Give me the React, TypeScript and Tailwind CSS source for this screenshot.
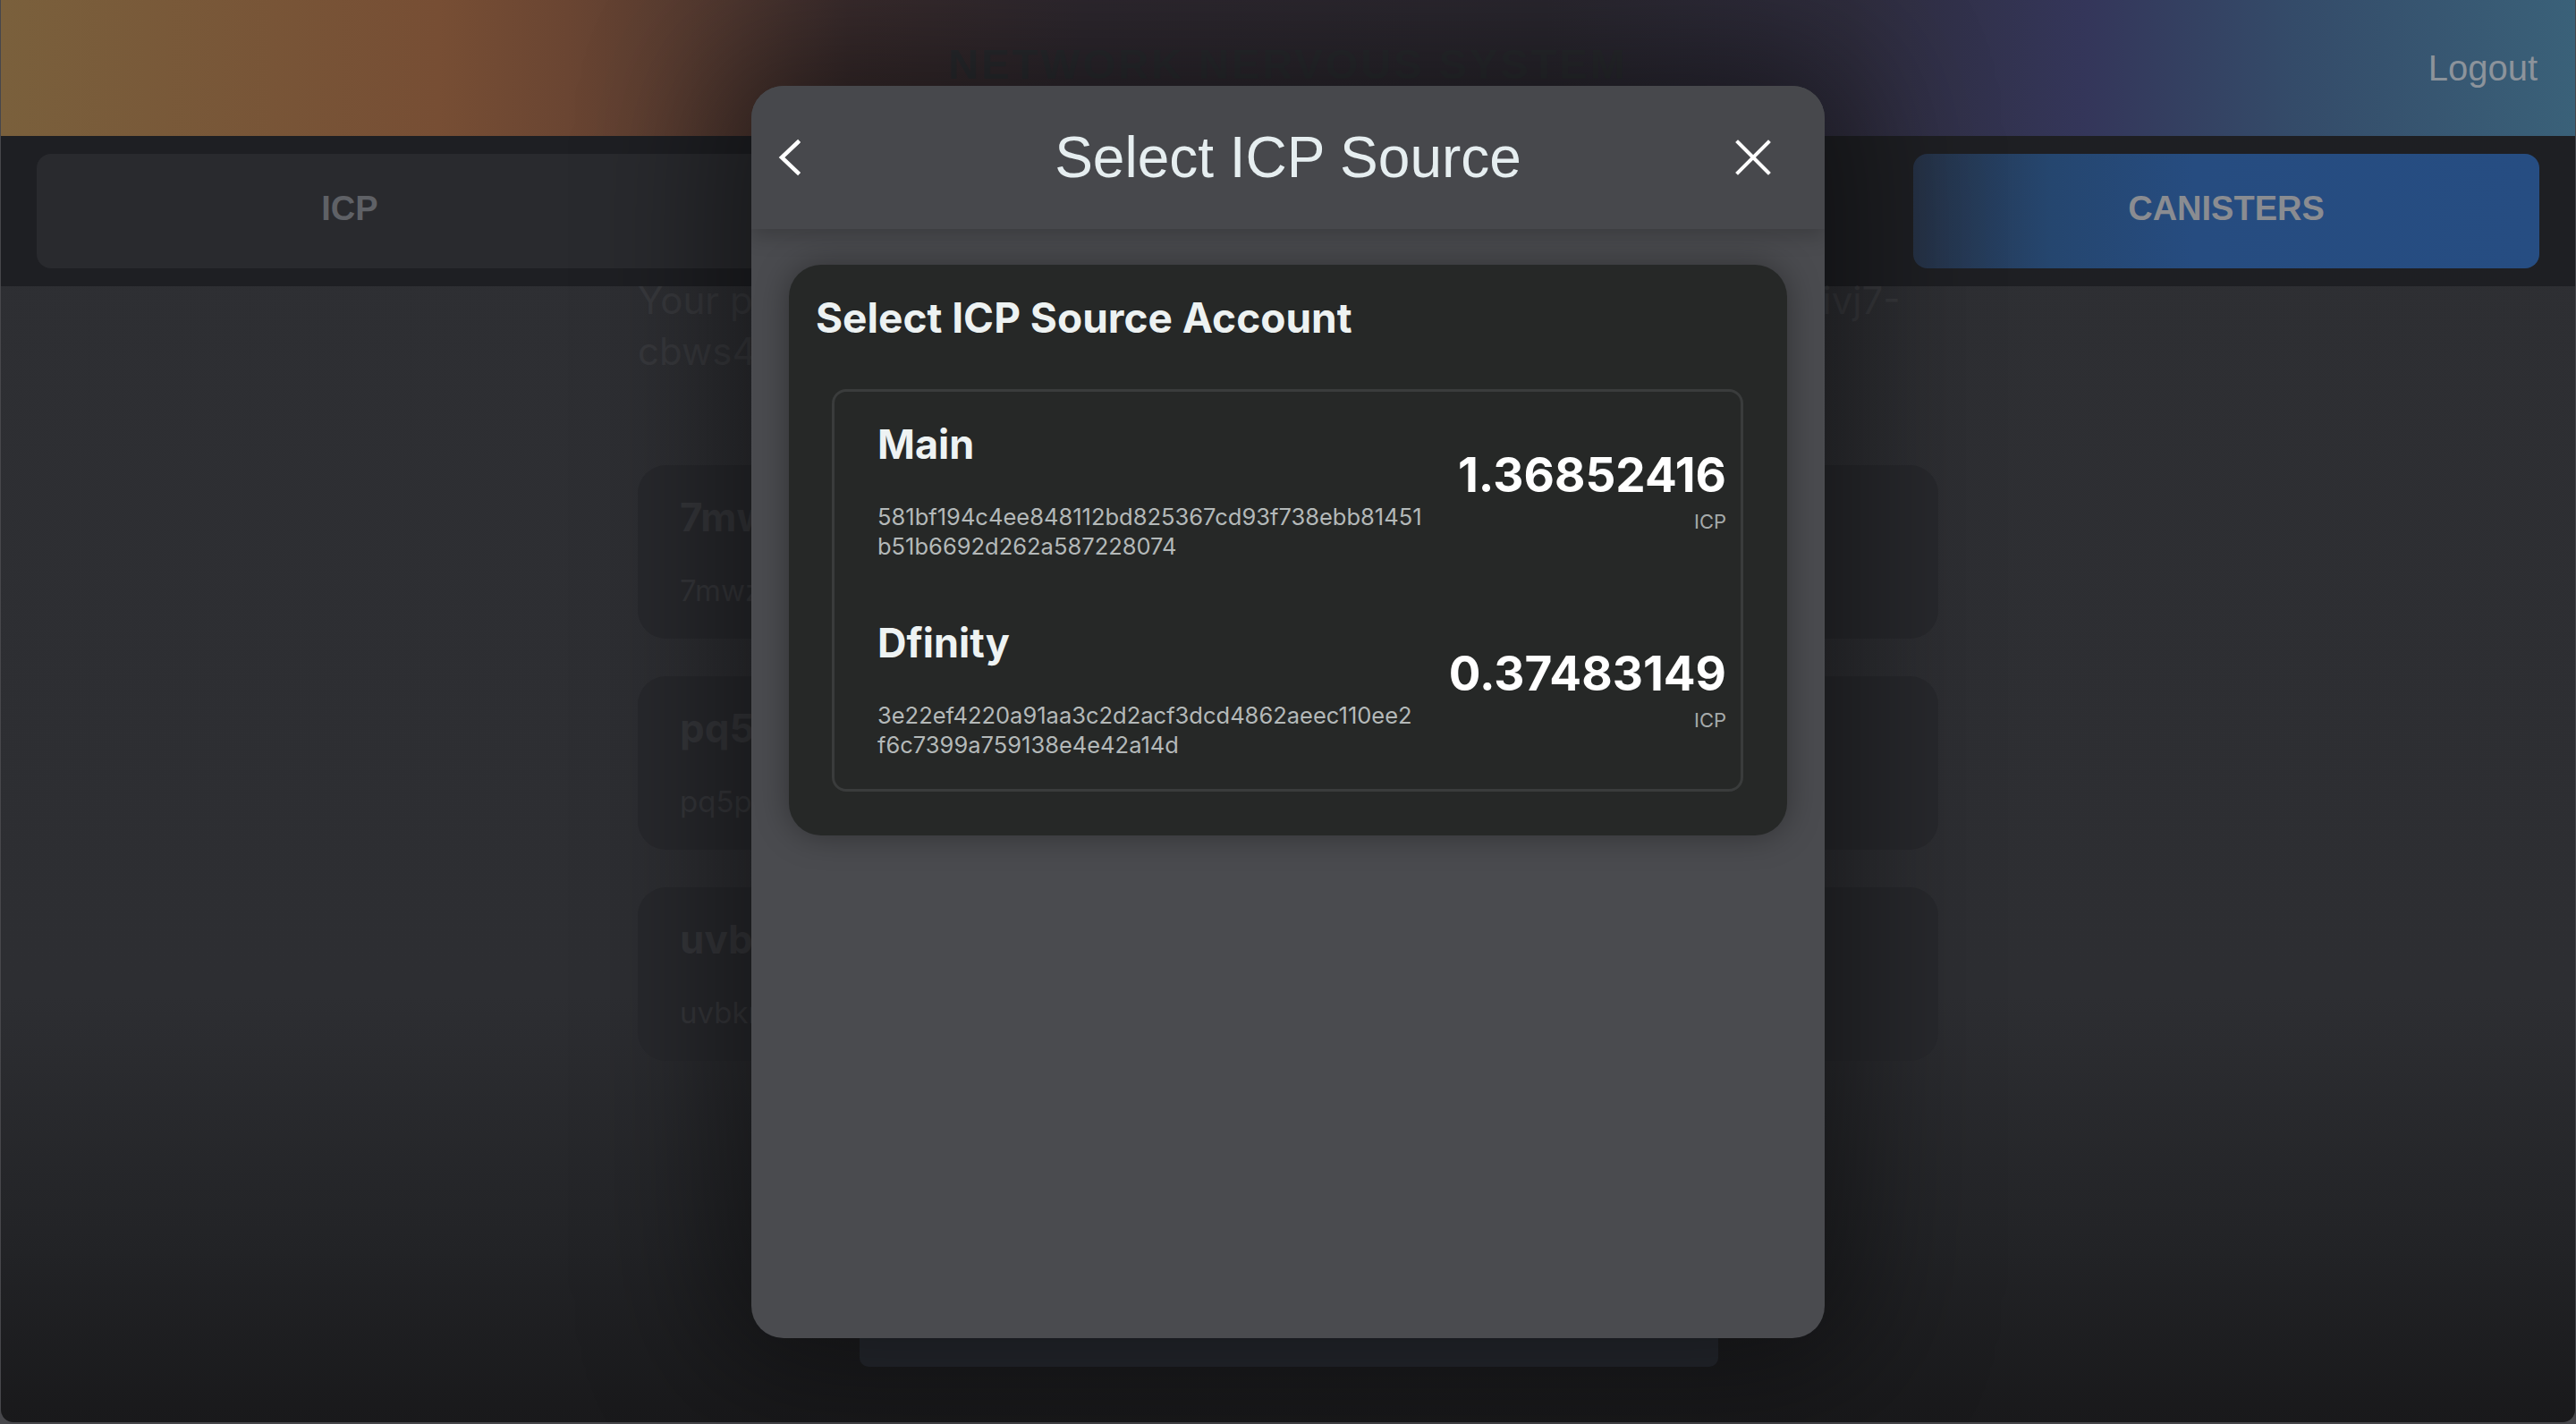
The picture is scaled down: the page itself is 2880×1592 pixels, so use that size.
import React from "react";

const accounts = [
  {
    name: "Main",
    address: ["581bf194c4ee848112bd825367cd93f738ebb81451", "b51b6692d262a587228074"],
    amount: "1.36852416",
  },
  {
    name: "Dfinity",
    address: ["3e22ef4220a91aa3c2d2acf3dcd4862aeec110ee2", "f6c7399a759138e4e42a14d"],
    amount: "0.37483149",
  },
];

const canisters = [
  { title: "7mwzi-4iaaa", sub: "7mwzi-4iaaa" },
  { title: "pq5pc-vqaaa", sub: "pq5pc-vqaaa" },
  { title: "uvbkm-5iaaa", sub: "uvbkm-5iaaa" },
];

function ChevronLeft() {
  return (
    <svg width="30" height="44" viewBox="0 0 30 44" fill="none">
      <path d="M22 5 L4 22 L22 39" stroke="#ffffff" strokeWidth="4.5" strokeLinecap="square" strokeLinejoin="miter" />
    </svg>
  );
}

function CloseX() {
  return (
    <svg width="40" height="40" viewBox="0 0 40 40" fill="none">
      <path d="M3 3 L37 37 M37 3 L3 37" stroke="#ffffff" strokeWidth="4" strokeLinecap="square" />
    </svg>
  );
}

export default function App() {
  return (
    <div className="relative h-[1592px] w-[2880px] overflow-hidden bg-[#47474b] font-['Inter',sans-serif]">
      {/* page behind the dialog */}
      <div className="mx-[1px] flex h-[1590px] flex-col overflow-hidden rounded-b-[14px] bg-[linear-gradient(180deg,#2e2f33_0%,#2d2e32_70%,#222326_88%,#19191b_100%)]">
        <header className="grid h-[152px] shrink-0 grid-cols-[1fr_auto_1fr] items-center bg-[linear-gradient(90deg,#7a603c_0%,#774e34_17%,#6a4532_22%,#3a2c2d_33%,#2f2930_42%,#2b2830_60%,#2f2d3e_72%,#34365a_81%,#344b69_89%,#3a6179_100%)] px-[42px]">
          <div />
          <h1 className="mb-[8px] font-['Liberation_Sans',Arial,sans-serif] text-[47px] font-bold tracking-[3px] text-[#2a2c30]">
            NETWORK NERVOUS SYSTEM
          </h1>
          <button className="justify-self-end font-['Liberation_Sans',Arial,sans-serif] text-[40px] text-[#8c939b]">
            Logout
          </button>
        </header>

        <nav className="flex h-[168px] shrink-0 items-stretch bg-[#1e1f23] px-[40px] py-[20px] font-['Liberation_Sans',Arial,sans-serif] text-[38px] font-bold text-[#5f6166]">
          <div className="flex w-[700px] items-center justify-center rounded-l-[16px] bg-[#292a2e] pb-[6px]">ICP</div>
          <div className="flex flex-1 items-center justify-center bg-[#292a2e] pb-[6px]">NEURONS</div>
          <div className="flex flex-1 items-center justify-center rounded-r-[16px] bg-[#292a2e] pb-[6px]">VOTING</div>
          <div className="ml-[150px] flex w-[700px] items-center justify-center rounded-[16px] bg-[linear-gradient(90deg,#263246_0%,#25466f_22%,#264c80_45%,#264d82_100%)] pb-[6px] text-[#8a8c91]">
            CANISTERS
          </div>
        </nav>

        <main className="mx-auto w-[1454px]">
          <p className="-mt-[13px] whitespace-nowrap text-[42px] leading-[57px] text-[#38393d]">
            Your principal id is fbfoa-ktvq4-mgwck-jjwna-sr6fo-fh5xq-pnyhu-livj7-
            <br />
            cbws4-lqe
          </p>
          <div className="mt-[99px] flex flex-col gap-[42px]">
            {canisters.map((c) => (
              <div key={c.title} className="h-[194px] rounded-[32px] bg-[#28292d] px-[47px] pt-[32px]">
                <div className="text-[44px] font-bold leading-[52px] text-[#36373b]">{c.title}</div>
                <div className="mt-[36px] text-[33px] leading-[40px] text-[#36373b]">{c.sub}</div>
              </div>
            ))}
          </div>
        </main>
      </div>

      {/* bottom floating button of the page, mostly hidden by the dialog */}
      <div className="absolute left-[961px] top-[1380px] h-[148px] w-[960px] rounded-[10px] bg-[#272a31]" />

      {/* dialog */}
      <div className="absolute left-[840px] top-[96px] flex h-[1400px] w-[1200px] flex-col overflow-hidden rounded-[36px] bg-[#4a4b4f] shadow-[0_0_150px_40px_rgba(0,0,0,0.45)]">
        <div className="relative z-10 grid h-[160px] shrink-0 grid-cols-[1fr_auto_1fr] items-center bg-[#47484c] px-[30px] shadow-[0_8px_22px_rgba(0,0,0,0.2)]">
          <button className="justify-self-start">
            <ChevronLeft />
          </button>
          <h2 className="font-['Liberation_Sans',Arial,sans-serif] text-[64px] leading-none text-[#e6eef0]">
            Select ICP Source
          </h2>
          <button className="mr-[30px] justify-self-end">
            <CloseX />
          </button>
        </div>

        <div className="px-[42px] pt-[40px]">
          <div className="rounded-[36px] bg-[#262827] px-[30px] pb-[49px] pt-[31px] shadow-[0_0_36px_rgba(0,0,0,0.35)]">
            <h3 className="text-[46px] font-bold leading-[56px] text-[#edf2f2]">Select ICP Source Account</h3>
            <div className="ml-[18px] mr-[19px] mt-[52px] rounded-[16px] border-[3px] border-[#3a3c3c]">
              {accounts.map((a) => (
                <div key={a.name} className="flex items-center justify-between py-[33px] pl-[48px] pr-[16px]">
                  <div>
                    <div className="text-[45px] font-bold leading-[52px] text-[#eef3f3]">{a.name}</div>
                    <div className="mt-[38px] text-[25.5px] leading-[33px] text-[#b4b9b9]">
                      <span className="block">{a.address[0]}</span>
                      <span className="block">{a.address[1]}</span>
                    </div>
                  </div>
                  <div className="text-right">
                    <div className="text-[53px] font-bold leading-[56px] text-white">{a.amount}</div>
                    <div className="mt-[11px] text-[22px] leading-[26px] text-[#a6abab]">ICP</div>
                  </div>
                </div>
              ))}
            </div>
          </div>
        </div>
      </div>
    </div>
  );
}
